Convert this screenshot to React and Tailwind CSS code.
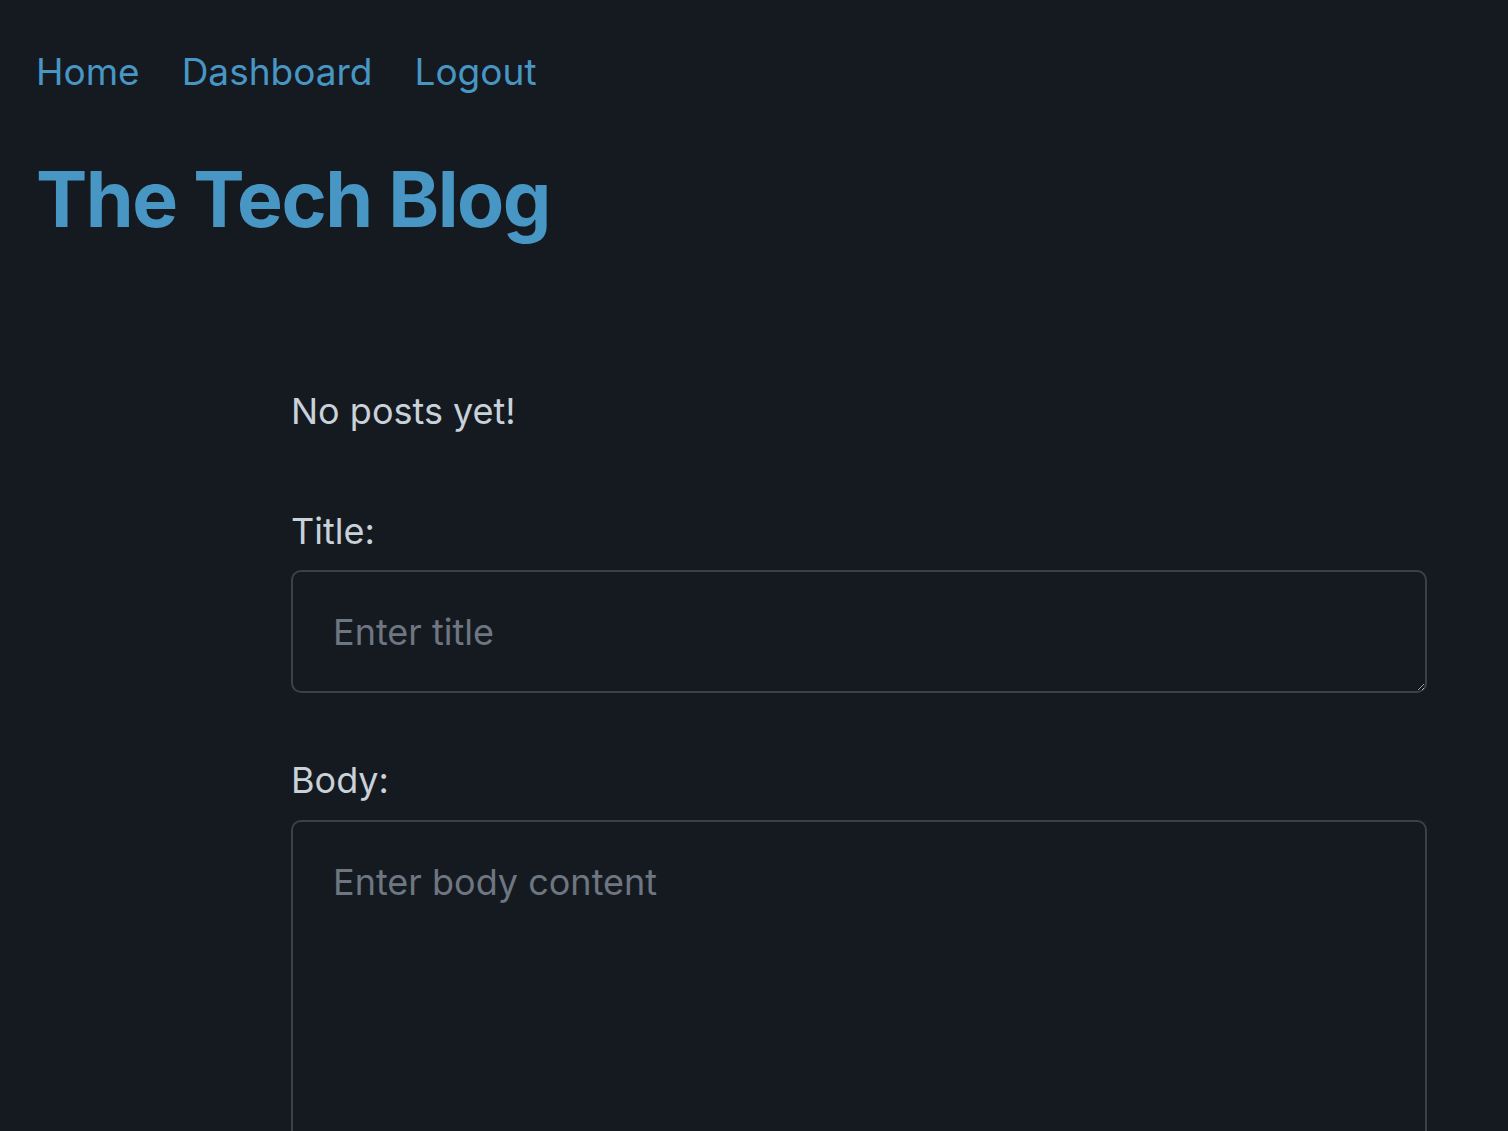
export default function App() {
  return (
    <div className="h-screen bg-[#151a21] font-['Inter',sans-serif] text-[#c9d1d9] overflow-hidden">
      <header className="px-[36px] pt-[45px]">
        <nav className="flex gap-[42px] text-[37px] leading-[54px] text-[#4796c4]">
          <a href="#">Home</a>
          <a href="#">Dashboard</a>
          <a href="#">Logout</a>
        </nav>
        <h1 className="mt-[55px] text-[77px] leading-[90px] font-bold tracking-[-0.02em] text-[#4796c4]">
          The Tech Blog
        </h1>
      </header>

      <main className="ml-[291px] w-[1136px] pt-[140px]">
        <p className="text-[36px] leading-[54px]">No posts yet!</p>

        <form className="mt-[66px] flex flex-col">
          <label className="text-[36px] leading-[54px]">Title:</label>
          <textarea
            placeholder="Enter title"
            className="mt-[12px] h-[123px] rounded-[10px] border-2 border-[#3a414b] bg-transparent px-[40px] py-[33px] text-[36px] leading-[54px] text-[#c9d1d9] placeholder:text-[#6e7681] outline-none"
          />
          <label className="mt-[60px] text-[36px] leading-[54px]">Body:</label>
          <textarea
            placeholder="Enter body content"
            className="mt-[13px] h-[400px] rounded-[10px] border-2 border-[#3a414b] bg-transparent px-[40px] py-[33px] text-[36px] leading-[54px] text-[#c9d1d9] placeholder:text-[#6e7681] outline-none"
          />
        </form>
      </main>
    </div>
  )
}
